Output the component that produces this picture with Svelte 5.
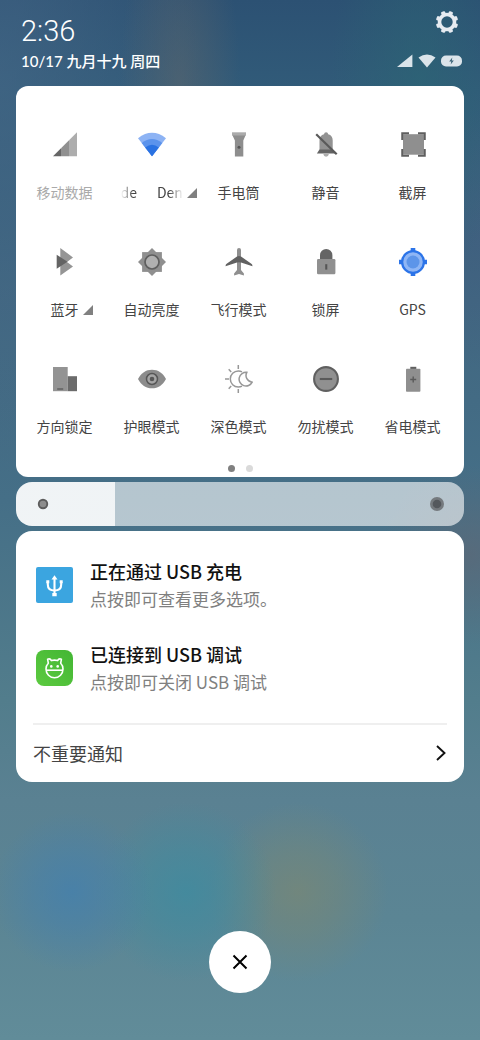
<script>
  const tiles = [
    { id: 'data', label: '移动数据', disabled: true },
    { id: 'wifi', label: 'de Den', scrolling: true, more: true, on: true },
    { id: 'torch', label: '手电筒' },
    { id: 'mute', label: '静音' },
    { id: 'shot', label: '截屏' },
    { id: 'bluetooth', label: '蓝牙', more: true },
    { id: 'auto', label: '自动亮度' },
    { id: 'plane', label: '飞行模式' },
    { id: 'lock', label: '锁屏' },
    { id: 'gps', label: 'GPS', on: true },
    { id: 'rotate', label: '方向锁定' },
    { id: 'eye', label: '护眼模式' },
    { id: 'dark', label: '深色模式' },
    { id: 'dnd', label: '勿扰模式' },
    { id: 'saver', label: '省电模式' }
  ];
  const teeth = [0, 1, 2, 3, 4, 5, 6, 7].map((i) => 22.5 + i * 45);
  let brightness = $state(22);
</script>

<main class="shade">
  <header>
    <div class="clock">
      <time class="time">2:36</time>
      <div class="date">10/17 九月十九 周四</div>
    </div>
    <div class="corner">
      <button class="plain gear" aria-label="设置">
        <svg width="24" height="24" viewBox="-12 -12 24 24">
          {#each teeth as a}
            <rect x="-2.2" y="-11.2" width="4.4" height="4" rx="1.2" fill="#e6ebf1" transform="rotate({a})" />
          {/each}
          <circle r="7.5" fill="none" stroke="#e6ebf1" stroke-width="3.6" />
        </svg>
      </button>
      <div class="status">
        <svg width="16" height="14" viewBox="0 0 16 14"><path d="M0 13 15.400 .6V13z" fill="#dbe4ea" /></svg>
        <svg width="18" height="14" viewBox="0 0 18 14"><path d="M.5 3.600Q9-2.600 17.500 3.600L9 13.400z" fill="#dbe4ea" /></svg>
        <svg width="21" height="14" viewBox="0 0 21 14">
          <rect y="1.500" width="21" height="11" rx="5" fill="#dbe4ea" />
          <path d="M11.300 3.600 8.200 7.600H10.300L9.700 10.500 12.800 6.400H10.800z" fill="#3a6277" />
        </svg>
      </div>
    </div>
  </header>

  <section class="card panel">
    <div class="tiles">
      {#each tiles as t (t.id)}
        <button class="plain tile" class:off={t.disabled} aria-pressed={!!t.on}>
          <svg width="28" height="28" viewBox="0 0 28 28">
            {#if t.id === 'data'}
              <path d="M2 25.300 10 17.300V25.300z" fill="#666" />
              <path d="M10 17.300 18 9.300V25.300H10z" fill="#909090" />
              <path d="M18 9.300 26 1.300V25.300H18z" fill="#adadad" />
            {:else if t.id === 'wifi'}
              <path d="M0 7.200Q14-3.600 28 7.200L14 25.200z" fill="#8db3f4" />
              <path d="M3.700 12Q14 4.200 24.300 12L14 25.200z" fill="#5b93ec" />
              <path d="M7.200 16.500Q14 11 20.800 16.500L14 25.200z" fill="#2a72e2" />
            {:else if t.id === 'torch'}
              <path d="M7.300 4H20.700L18.300 9.500V25.600H9.900V9.500z" fill="#8e8e8e" />
              <path d="M7 1.300H21V4.500H7z" fill="#ababab" />
              <circle cx="14" cy="16.300" r="1.500" fill="#555" />
            {:else if t.id === 'mute'}
              <path d="M11.300 23H16.900Q16.500 25.700 14.100 25.700T11.300 23z" fill="#adadad" />
              <path d="M7.500 19V9.500Q7.500 4.500 12 3.300Q12.300 1.200 14.100 1.200T16.200 3.300Q20.700 4.500 20.700 9.500V19z" fill="#929292" />
              <path d="M7.500 18.500H20.700L23.300 22.500H4.900z" fill="#646464" />
              <path d="M4.200 3.200 24.700 23.300" stroke="#5a5a5a" stroke-width="2.200" />
            {:else if t.id === 'shot'}
              <path d="M4 3.200H25V23.700H4z" fill="#8f8f8f" />
              <path d="M3.200 9V2.200H10M19 2.200H25.800V9M25.800 18V24.700H19M10 24.700H3.200V18" fill="none" stroke="#5f5f5f" stroke-width="1.900" />
            {:else if t.id === 'bluetooth'}
              <path d="M9.300 0 22 9.400 9.300 19zM9.300 9 22 18.400 9.300 27.500z" fill="#959595" />
              <path d="M5.700 6.700 16.500 13.800 5.700 20.800z" fill="#646464" />
            {:else if t.id === 'auto'}
              <path d="M4.100 4.100H23.900V23.900H4.100z" fill="#8f8f8f" />
              <path d="M14 0 28 14 14 28 0 14z" fill="#8f8f8f" />
              <circle cx="14" cy="14" r="7" fill="#b0b0b0" stroke="#5f5f5f" stroke-width="1.700" />
            {:else if t.id === 'plane'}
              <path d="M12 2Q12 0 14 0T16 2V22L18.900 25.600V27.500L14 26 9.100 27.500V25.600L12 22z" fill="#8f8f8f" />
              <path d="M.5 18.200Q.5 16.400 2 15.500L12 8.600Q14 7.600 16 8.600L26 15.500Q27.500 16.400 27.500 18.200L16 14.400Q14 13.900 12 14.400z" fill="#616161" />
            {:else if t.id === 'lock'}
              <path d="M8 11.500V7.200A6.200 6.200 0 0 1 20.400 7.200V11.500z" fill="#656565" />
              <rect x="5" y="11" width="18.400" height="15.200" rx="1.200" fill="#909090" />
              <path d="M13.200 16.200H15.300V21.600H13.200z" fill="#555" />
            {:else if t.id === 'gps'}
              <path d="M14 0V28M0 14H28" stroke="#2c74e8" stroke-width="4.600" />
              <circle cx="14" cy="14" r="10.900" fill="#8fb6f5" stroke="#2c74e8" stroke-width="2.300" />
              <circle cx="14" cy="14" r="6.500" fill="#5d95e9" />
            {:else if t.id === 'rotate'}
              <path d="M2 2H16.700V26.200H2z" fill="#939393" />
              <path d="M16.700 11.200H26V26.200H16.700z" fill="#6b6b6b" />
              <path d="M6.200 24H12.200" stroke="#606060" stroke-width="1.500" />
            {:else if t.id === 'eye'}
              <path d="M0 14C3 8 8 4.700 14 4.700S25 8 28 14C25 20 20 23.300 14 23.300S3 20 0 14z" fill="#8c8c8c" />
              <circle cx="14" cy="14" r="5.500" fill="#a5a5a5" stroke="#575757" stroke-width="1.500" />
              <circle cx="14" cy="14" r="2.300" fill="#575757" />
            {:else if t.id === 'dark'}
              <g fill="none" stroke="#989898" stroke-width="1.500">
                <path d="M17 21.200Q15.500 22 13.300 22A8 8 0 0 1 13.300 6Q15.500 6 17 6.800M13.300 0V4M13.300 24V28M0 14H4M3.700 4.200 6.200 6.900M3.700 23.800 6.200 21.100" />
                <path d="M21.800 7.300A6.900 6.900 0 1 0 27.200 17.200A6.800 6.800 0 0 1 21.800 7.300z" />
              </g>
            {:else if t.id === 'dnd'}
              <circle cx="14" cy="14" r="11.900" fill="#909090" stroke="#606060" stroke-width="2.100" />
              <path d="M7.800 14H20.200" stroke="#5a5a5a" stroke-width="2.100" />
            {:else}
              <path d="M11.300 1.800H17.300V4.200H11.300z" fill="#606060" />
              <rect x="7" y="3.800" width="14.400" height="23" rx=".8" fill="#8f8f8f" />
              <path d="M11.200 14.500H17.200M14.200 11.500V17.500" stroke="#5a5a5a" stroke-width="1.400" />
            {/if}
          </svg>
          <span class="label">
            {#if t.scrolling}
              <span class="marquee"><span>de</span><span>Den</span></span>
            {:else}
              {t.label}
            {/if}
            {#if t.more}
              <svg class="more" width="10" height="10" viewBox="0 0 10 10"><path d="M0 10 10 0V10z" fill="#808080" /></svg>
            {/if}
          </span>
        </button>
      {/each}
    </div>
    <div class="dots"><i class="current"></i><i></i></div>
  </section>

  <div class="slider">
    <input type="range" min="0" max="100" bind:value={brightness} aria-label="亮度" style="--level: {brightness}%" />
    <svg class="low" width="12" height="12" viewBox="0 0 12 12"><circle cx="6" cy="6" r="5.200" fill="#5c5c5c" /><circle cx="6" cy="6" r="3.300" fill="#8d8d8d" /></svg>
    <svg class="high" width="14" height="14" viewBox="0 0 14 14"><circle cx="7" cy="7" r="7" fill="#757a7e" /><circle cx="7" cy="7" r="4.300" fill="#54585c" /></svg>
  </div>

  <section class="card notices">
    <article>
      <svg width="37" height="36" viewBox="0 0 37 36">
        <rect width="37" height="36" rx="2" fill="#3ba5e0" />
        <g fill="none" stroke="#fff" stroke-width="2.100">
          <path d="M18.500 12V28" />
          <path d="M11.800 15V17.500Q11.800 23.500 18.500 23.500T25.200 17.500V15" />
        </g>
        <path d="M15.500 12.500 18.500 8.200 21.500 12.500zM16.300 26H20.700V29.200H16.300zM10.300 13.200H13.300V16.300H10.300zM23.700 13.200H26.700V16.300H23.700z" fill="#fff" />
      </svg>
      <div>
        <h2>正在通过 USB 充电</h2>
        <p>点按即可查看更多选项。</p>
      </div>
    </article>
    <article>
      <svg width="37" height="36" viewBox="0 0 37 36">
        <defs><linearGradient id="leaf" x1="0" y1="1" x2="1" y2="0"><stop stop-color="#5cca40" /><stop offset="1" stop-color="#43b634" /></linearGradient></defs>
        <rect width="37" height="36" rx="8" fill="url(#leaf)" />
        <g fill="none" stroke="#fff" stroke-width="1.600" stroke-linejoin="round">
          <path d="M12.300 13.200 11.600 9.200Q14.300 8.200 15.400 10.600Q18.500 9.700 21.600 10.600Q22.700 8.200 25.400 9.200L24.700 13.200Q27 15.500 27 19A8.500 8.800 0 0 1 10 19Q10 15.500 12.300 13.200z" />
          <path d="M10 20.200H27" />
        </g>
        <circle cx="15.300" cy="16.400" r="1.300" fill="#fff" /><circle cx="21.700" cy="16.400" r="1.300" fill="#fff" />
      </svg>
      <div>
        <h2>已连接到 USB 调试</h2>
        <p>点按即可关闭 USB 调试</p>
      </div>
    </article>
    <button class="plain unimportant">
      <span>不重要通知</span>
      <svg width="12" height="18" viewBox="0 0 12 18"><path d="M2 2 9.500 9 2 16" fill="none" stroke="#111" stroke-width="1.900" /></svg>
    </button>
  </section>

  <button class="plain close" aria-label="关闭">
    <svg width="16" height="16" viewBox="0 0 16 16"><path d="M1.500 1.500 14.500 14.500M14.500 1.500 1.500 14.500" stroke="#000" stroke-width="2" /></svg>
  </button>
</main>

<style>
  .shade {
    box-sizing: border-box;
    min-height: 100vh;
    padding: 0 16px 47px;
    display: flex;
    flex-direction: column;
    gap: 5px;
    font-family: "Noto Sans CJK SC", sans-serif;
    background:
      radial-gradient(circle at 72px 892px, #4580acd0, #4580ac80 35px, #4580ac00 80px),
      radial-gradient(circle at 186px 892px, #3f8b9fd0, #3f8b9f80 40px, #3f8b9f00 90px),
      radial-gradient(circle at 298px 892px, #768778d0, #76877880 40px, #76877800 90px),
      radial-gradient(ellipse at 180px 84px, #5d666c90, #5d666c00 60px),
      radial-gradient(ellipse at 420px 86px, #2b687490, #2b687400 90px),
      radial-gradient(ellipse at 0 80px, #466887a0, #46688700 200px),
      radial-gradient(circle at 470px 555px, #5c6877c0, #5c687700 90px),
      radial-gradient(circle at 480px 240px, #415f80b0, #415f8000 130px),
      linear-gradient(#2c5173, #315b79 90px, #416781 300px, #456f87 500px, #527d8c 700px, #5a8192 800px, #5b8594 920px, #618c99 1040px);
  }
  .plain {
    margin: 0;
    padding: 0;
    border: 0;
    background: none;
    font: inherit;
    color: inherit;
    cursor: pointer;
  }
  svg { display: block; flex: none; }
  header {
    box-sizing: border-box;
    height: 81px;
    padding: 10px 2px 0 5px;
    display: flex;
    justify-content: space-between;
    color: #fff;
  }
  .time {
    display: block;
    height: 40px;
    font: 300 29px/42px Roboto, sans-serif;
  }
  .date {
    font: 500 15px/22px Lato, "Noto Sans CJK SC", sans-serif;
  }
  .corner {
    display: flex;
    flex-direction: column;
    align-items: flex-end;
    gap: 20px;
  }
  .gear { margin-right: 3px; }
  .status { display: flex; gap: 5px; }
  .card { background: #fff; }
  .panel {
    box-sizing: border-box;
    height: 391px;
    border-radius: 12px;
    padding-top: 45px;
  }
  .tiles {
    display: grid;
    grid-template-columns: repeat(5, 1fr);
    grid-auto-rows: 117px;
    padding: 0 8px 0 5px;
  }
  .tile {
    display: flex;
    flex-direction: column;
    align-items: center;
    justify-content: flex-start;
    gap: 23px;
    color: #444;
  }
  .off { color: #aaa; }
  .label {
    position: relative;
    font-size: 14px;
    line-height: 20px;
    white-space: nowrap;
  }
  .more {
    position: absolute;
    left: 100%;
    top: 6px;
    margin-left: 4px;
  }
  .marquee {
    display: flex;
    gap: 20px;
    width: 62px;
    overflow: hidden;
    mask-image: linear-gradient(90deg, transparent, #000 12px, #000 48px, transparent);
  }
  .dots {
    display: flex;
    justify-content: center;
    gap: 11px;
    margin-top: -17px;
  }
  .dots i {
    width: 7px;
    height: 7px;
    border-radius: 50%;
    background: #dadada;
  }
  .dots .current { background: #808080; }
  .slider { position: relative; height: 44px; }
  .slider input {
    appearance: none;
    display: block;
    width: 100%;
    height: 44px;
    margin: 0;
    border-radius: 16px;
    background: linear-gradient(90deg, #ffffffeb var(--level), #ffffff9a var(--level));
  }
  .slider input::-webkit-slider-thumb {
    appearance: none;
    width: 20px;
    height: 44px;
    background: transparent;
  }
  .slider svg { position: absolute; pointer-events: none; }
  .low { left: 21px; top: 16px; }
  .high { right: 20px; top: 15px; }
  .notices {
    box-sizing: border-box;
    border-radius: 16px;
    padding: 27px 17px 0;
  }
  article {
    display: flex;
    gap: 17px;
    height: 83px;
    padding-left: 3px;
  }
  article svg { margin-top: 9px; }
  h2, p {
    margin: 0;
    font-size: 17px;
    line-height: 27px;
    font-weight: 400;
    color: #808080;
  }
  h2 { font-size: 18px; font-weight: 500; color: #111; }
  .unimportant {
    width: 100%;
    height: 59px;
    margin-top: -1px;
    padding-bottom: 2px;
    display: flex;
    align-items: center;
    justify-content: space-between;
    border-top: 2px solid #efefef;
    font-size: 18px;
    color: #444;
  }
  .close {
    width: 62px;
    height: 62px;
    margin: auto auto 0;
    display: grid;
    place-items: center;
    border-radius: 50%;
    background: #fff;
  }
</style>
